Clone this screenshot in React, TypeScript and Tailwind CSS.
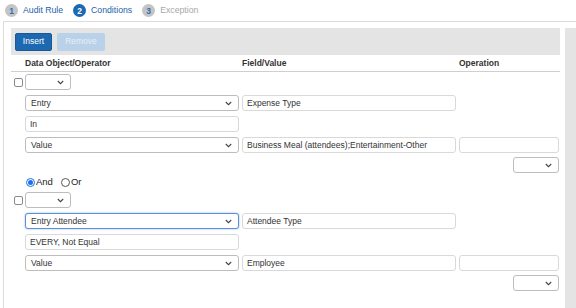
import React from 'react';

const Chevron = () => (
  <svg width="7" height="5" viewBox="0 0 7 5" className="shrink-0">
    <path d="M0.8 1 L3.5 3.7 L6.2 1" fill="none" stroke="#444" strokeWidth="1.1" />
  </svg>
);

const Select = ({ value = '', w, focus = false }: { value?: string; w: string; focus?: boolean }) => (
  <div
    className={`${w} h-[16px] flex items-center justify-between pl-[5px] pr-[6px] rounded-[3px] bg-white border ${
      focus ? 'border-[#5b8fd6] shadow-[0_0_2px_rgba(60,120,210,0.6)]' : 'border-[#bdbdbd]'
    }`}
  >
    <span>{value}</span>
    <Chevron />
  </div>
);

const Field = ({ value = '', w }: { value?: string; w: string }) => (
  <div className={`${w} h-[16px] flex items-center pl-[4px] rounded-[3px] bg-white border border-[#d9d9d9]`}>
    {value}
  </div>
);

const Checkbox = () => <div className="w-[9px] h-[9px] border border-[#8a8a8a] rounded-[2px] bg-white" />;

const Tab = ({ n, label, state }: { n: number; label: string; state: 'done' | 'active' | 'todo' }) => (
  <div className="flex items-center">
    <div
      className={`w-[13px] h-[13px] rounded-full flex items-center justify-center text-[8.5px] font-bold ${
        state === 'active' ? 'bg-[#1b68b3] text-white' : 'bg-[#c4c4c4] text-[#2d6db5]'
      }`}
    >
      {n}
    </div>
    <span
      className={`ml-[5px] text-[8.7px] ${state === 'todo' ? 'text-[#a8a8a8]' : 'text-[#2462a8]'}`}
    >
      {label}
    </span>
  </div>
);

type Cond = { obj: string; field: string; op: string; value: string; focus?: boolean };

const Condition = ({ c }: { c: Cond }) => (
  <>
    <div className="flex items-center">
      <div className="w-[14px] flex justify-center pl-[1px]"><Checkbox /></div>
      <Select w="w-[46px]" />
    </div>
    <div className="pl-[14px] mt-[5px] flex gap-[3px]">
      <Select w="w-[214px]" value={c.obj} focus={c.focus} />
      <Field w="w-[214px]" value={c.field} />
    </div>
    <div className="pl-[14px] mt-[5px]">
      <Field w="w-[214px]" value={c.op} />
    </div>
    <div className="pl-[14px] mt-[5px] flex gap-[3px]">
      <Select w="w-[214px]" value="Value" />
      <Field w="w-[214px]" value={c.value} />
      <Field w="w-[100px]" />
    </div>
    <div className="flex justify-end pr-[1px] mt-[4px]">
      <Select w="w-[46px]" />
    </div>
  </>
);

export default function App() {
  const conds: Cond[] = [
    { obj: 'Entry', field: 'Expense Type', op: 'In', value: 'Business Meal (attendees);Entertainment-Other' },
    { obj: 'Entry Attendee', field: 'Attendee Type', op: 'EVERY, Not Equal', value: 'Employee', focus: true },
  ];

  return (
    <div className="w-[576px] h-[308px] bg-white overflow-hidden font-['Liberation_Sans',Arial,sans-serif] text-[8.5px] text-[#333]">
      <div className="h-[21px] flex items-center gap-[10px] pl-[5px] pt-[1px]">
        <Tab n={1} label="Audit Rule" state="done" />
        <Tab n={2} label="Conditions" state="active" />
        <Tab n={3} label="Exception" state="todo" />
      </div>

      <div className="ml-[3px] border-t border-[#dcdcdc] flex h-[287px]">
        <div className="w-[559px] border-l border-[#dcdcdc] pl-[7px] pt-[6px]">
          <div className="w-[549px] h-[27px] bg-[#e3e4e3] flex items-center gap-[5px] pl-[4px]">
            <button className="w-[37px] h-[18px] rounded-[2px] bg-[#1c69b2] border border-[#175a99] text-white text-[8.5px]">
              Insert
            </button>
            <button className="w-[48px] h-[18px] rounded-[2px] bg-[#b9d2ea] text-[#e6eff8] text-[8.5px]">
              Remove
            </button>
          </div>

          <div className="w-[549px] h-[17px] flex items-end pb-[1px] border-b border-[#cfcfcf] font-bold text-[8.5px] text-[#333]">
            <span className="ml-[14px] w-[217px]">Data Object/Operator</span>
            <span className="w-[217px]">Field/Value</span>
            <span>Operation</span>
          </div>

          <div className="w-[549px] pt-[2px]">
            <Condition c={conds[0]} />

            <div className="pl-[15px] mt-[3px] h-[12px] flex items-center text-[9.5px] text-[#222]">
              <div className="w-[9px] h-[9px] rounded-full border border-[#1a73e8] flex items-center justify-center">
                <div className="w-[5px] h-[5px] rounded-full bg-[#1a73e8]" />
              </div>
              <span className="ml-[1px]">And</span>
              <div className="ml-[8px] w-[9px] h-[9px] rounded-full border border-[#555]" />
              <span className="ml-[1px]">Or</span>
            </div>

            <div className="mt-[4px]">
              <Condition c={conds[1]} />
            </div>
          </div>
        </div>
        <div className="flex-1" />
        <div className="w-[11px] mt-[6px] bg-[#e3e4e3]" />
      </div>
    </div>
  );
}
